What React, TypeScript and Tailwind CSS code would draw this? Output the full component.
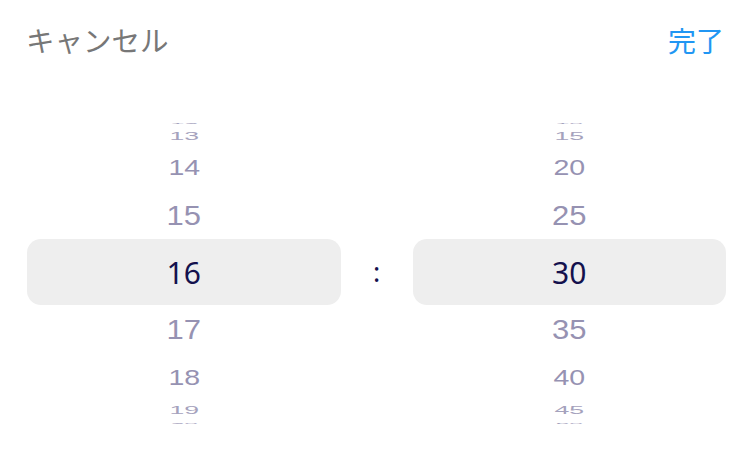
import React from "react";

// offsets on the wheel: distance from centre, vertical squash, horizontal shrink
const ROWS = [
    { y: 0, sy: 1, sx: 1 },
    { y: 57, sy: 0.92, sx: 1 },
    { y: 105, sy: 0.71, sx: 0.92 },
    { y: 137, sy: 0.38, sx: 0.86 },
    { y: 150, sy: 0.07, sx: 0.8 },
];

interface WheelProps {
    values: number[];
    selected: number;
}

function Wheel({ values, selected }: WheelProps) {
    const index = values.indexOf(selected);

    return (
        <div className="relative flex-1 h-[300px] flex flex-col justify-center">
            <div className="h-[66px] rounded-[14px] bg-[#eeeeee]" />
            {values.map((value, i) => {
                const k = i - index;
                const row = ROWS[Math.abs(k)];
                if (!row) return null;
                const isSelected = k === 0;
                return (
                    <div
                        key={value}
                        className="absolute left-0 right-0 top-1/2 h-0 flex items-center justify-center"
                    >
                        <div
                            className={
                                isSelected
                                    ? "text-[30px] leading-[40px] text-[#14114d] font-['Noto_Sans',sans-serif]"
                                    : "text-[31px] leading-[40px] text-[#9692b2] font-['Liberation_Sans',Arial,sans-serif]"
                            }
                            style={{
                                transform: `translateY(${k < 0 ? 1 - row.y : row.y + 1}px) scale(${row.sx}, ${row.sy})`,
                                opacity: Math.abs(k) >= 3 ? 0.85 : 1,
                            }}
                        >
                            {String(value).padStart(2, "0")}
                        </div>
                    </div>
                );
            })}
        </div>
    );
}

export default function App() {
    const hours = [12, 13, 14, 15, 16, 17, 18, 19, 20];
    const minutes = [10, 15, 20, 25, 30, 35, 40, 45, 50];

    return (
        <div className="w-[748px] h-[460px] bg-white font-['Noto_Sans_CJK_JP',sans-serif] overflow-hidden">
            <div className="flex items-center justify-between pl-[26px] pr-[24px] h-[80px]">
                <button className="text-[28.5px] text-[#777777] font-['Noto_Sans_CJK_JP',sans-serif]">
                    キャンセル
                </button>
                <button className="text-[28px] text-[#2196f3] font-['Noto_Sans_CJK_JP',sans-serif]">
                    完了
                </button>
            </div>
            <div className="flex items-center mt-[42px] pl-[27px] pr-[22px]">
                <Wheel values={hours} selected={16} />
                <div className="w-[72px] text-center text-[27px] text-[#14114d] font-['Noto_Sans',sans-serif]">
                    :
                </div>
                <Wheel values={minutes} selected={30} />
            </div>
        </div>
    );
}
